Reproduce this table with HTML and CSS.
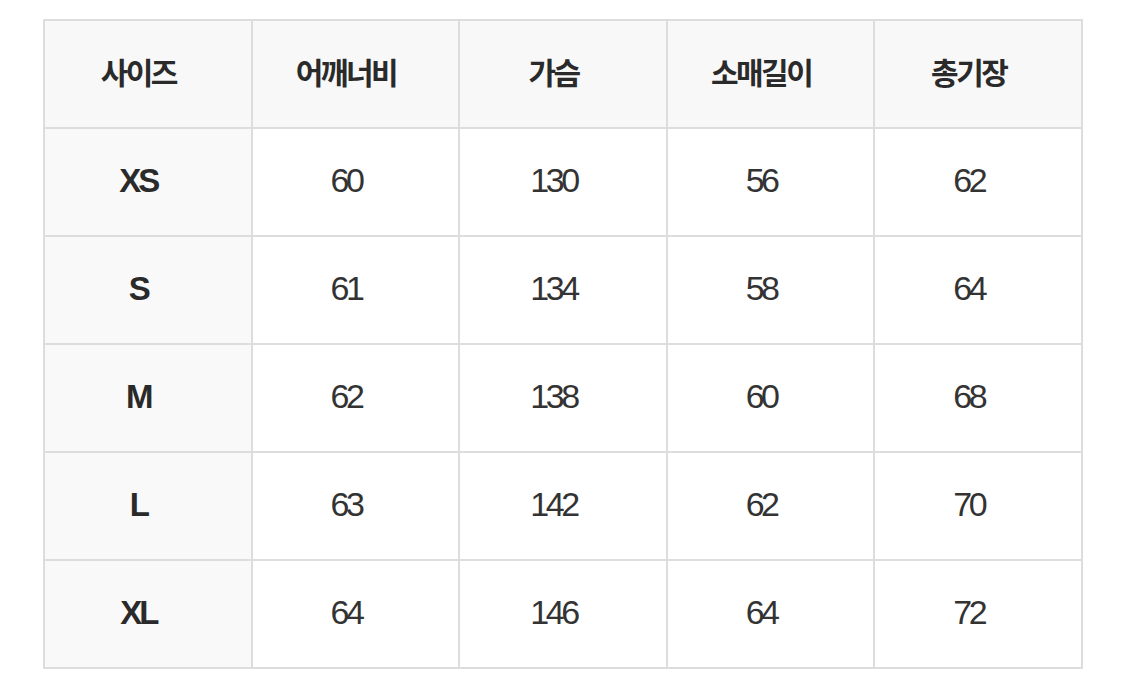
FILE: index.html
```html
<!DOCTYPE html>
<html lang="ko">
<head>
<meta charset="utf-8">
<title>사이즈</title>
<link rel="stylesheet" href="styles.css">
</head>
<body>
<div class="wrap">
<table class="size-table">
<thead>
<tr><th>사이즈</th><th>어깨너비</th><th>가슴</th><th>소매길이</th><th>총기장</th></tr>
</thead>
<tbody>
<tr><th>XS</th><td>60</td><td>130</td><td>56</td><td>62</td></tr>
<tr><th>S</th><td>61</td><td>134</td><td>58</td><td>64</td></tr>
<tr><th>M</th><td>62</td><td>138</td><td>60</td><td>68</td></tr>
<tr><th>L</th><td>63</td><td>142</td><td>62</td><td>70</td></tr>
<tr><th>XL</th><td>64</td><td>146</td><td>64</td><td>72</td></tr>
</tbody>
</table>
</div>
</body>
</html>
```
FILE: styles.css
```css
html, body {
  margin: 0;
  padding: 0;
  background: #ffffff;
}
.wrap {
  padding: 19px 0 0 43px;
}
.size-table {
  border-collapse: collapse;
  table-layout: fixed;
  width: 1040px;
  color: #333333;
  font-family: "Liberation Sans", "Noto Sans CJK KR", sans-serif;
}
.size-table th,
.size-table td {
  border: 2px solid #dddddd;
  height: 108px;
  padding: 0 19px 3px 0;
  box-sizing: border-box;
  text-align: center;
  vertical-align: middle;
}
.size-table thead th {
  background: #f8f8f8;
  font-family: "Noto Sans CJK KR", sans-serif;
  font-size: 30px;
  font-weight: 700;
  letter-spacing: -2.5px;
  color: #2a2a2a;
  padding-bottom: 6px;
}
.size-table tbody th {
  background: #f9f9f9;
  font-size: 33px;
  font-weight: 700;
  letter-spacing: -3px;
  color: #2a2a2a;
}
.size-table td {
  font-size: 34px;
  font-weight: 400;
  letter-spacing: -3.5px;
}
```
